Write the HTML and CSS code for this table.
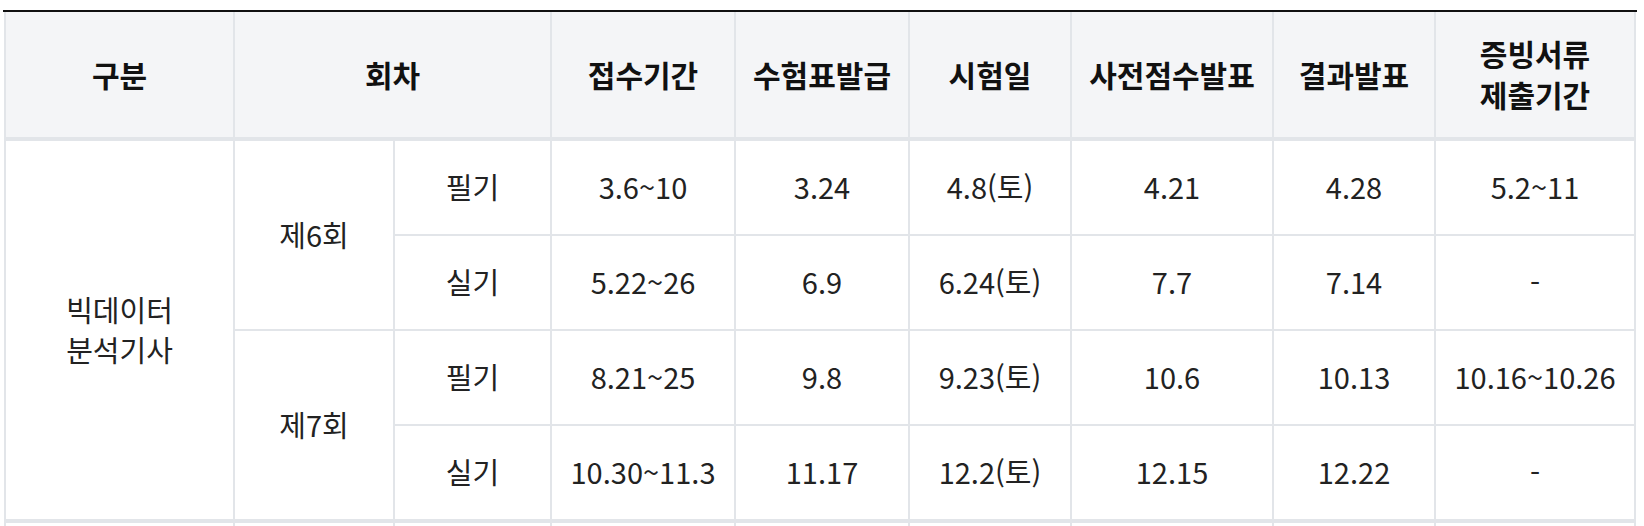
FILE: index.html
```html
<!DOCTYPE html>
<html lang="ko">
<head>
<meta charset="utf-8">
<title>빅데이터 분석기사 시험 일정</title>
<link rel="stylesheet" href="styles.css">
</head>
<body>
<div class="wrap">
  <div class="sched" role="table">
    <div class="c th c-gubun">구분</div>
    <div class="c th c-round">회차</div>
    <div class="c th">접수기간</div>
    <div class="c th">수험표발급</div>
    <div class="c th">시험일</div>
    <div class="c th">사전점수발표</div>
    <div class="c th">결과발표</div>
    <div class="c th">증빙서류<br>제출기간</div>

    <div class="c name last">빅데이터<br>분석기사</div>
    <div class="c round r6">제6회</div>
    <div class="c">필기</div>
    <div class="c">3.6~10</div>
    <div class="c">3.24</div>
    <div class="c">4.8(토)</div>
    <div class="c">4.21</div>
    <div class="c">4.28</div>
    <div class="c">5.2~11</div>

    <div class="c">실기</div>
    <div class="c">5.22~26</div>
    <div class="c">6.9</div>
    <div class="c">6.24(토)</div>
    <div class="c">7.7</div>
    <div class="c">7.14</div>
    <div class="c">-</div>

    <div class="c round r7 last">제7회</div>
    <div class="c">필기</div>
    <div class="c">8.21~25</div>
    <div class="c">9.8</div>
    <div class="c">9.23(토)</div>
    <div class="c">10.6</div>
    <div class="c">10.13</div>
    <div class="c">10.16~10.26</div>

    <div class="c last">실기</div>
    <div class="c last">10.30~11.3</div>
    <div class="c last">11.17</div>
    <div class="c last">12.2(토)</div>
    <div class="c last">12.15</div>
    <div class="c last">12.22</div>
    <div class="c last">-</div>

    <div class="c next"></div>
    <div class="c next"></div>
    <div class="c next"></div>
    <div class="c next"></div>
    <div class="c next"></div>
    <div class="c next"></div>
    <div class="c next"></div>
    <div class="c next"></div>
    <div class="c next"></div>
  </div>
</div>
</body>
</html>
```

FILE: styles.css
```css
html, body {
  margin: 0;
  padding: 0;
  background: #ffffff;
}

body {
  font-family: "Noto Sans CJK KR", "Noto Sans", sans-serif;
  color: #222222;
  overflow: hidden;
}

.wrap {
  margin: 10px 0 0 3px;
  width: 1632px;
  padding: 0 1px;
  border-top: 2px solid #111111;
}

.sched {
  display: grid;
  grid-template-columns: 229px 160px 157px 184px 174px 162px 202px 162px 200px;
  grid-template-rows: 129px 95px 95px 95px 97px 95px;
  border-left: 2px solid #e2e5e9;
  width: 1630px;
}

.c {
  box-sizing: border-box;
  display: flex;
  align-items: center;
  justify-content: center;
  text-align: center;
  padding-bottom: 3px;
  border-right: 2px solid #e2e5e9;
  border-bottom: 2px solid #e2e5e9;
  font-size: 29px;
  line-height: 40px;
  color: #222222;
}

.th {
  background: #f4f5f7;
  font-weight: 700;
  font-size: 30px;
  line-height: 41px;
  padding-bottom: 1px;
  color: #111111;
  border-bottom-width: 4px;
}

.c-round {
  grid-column: span 2;
}

.name {
  grid-row: span 4;
}

.round {
  grid-row: span 2;
}

.last {
  border-bottom-width: 4px;
}
```
